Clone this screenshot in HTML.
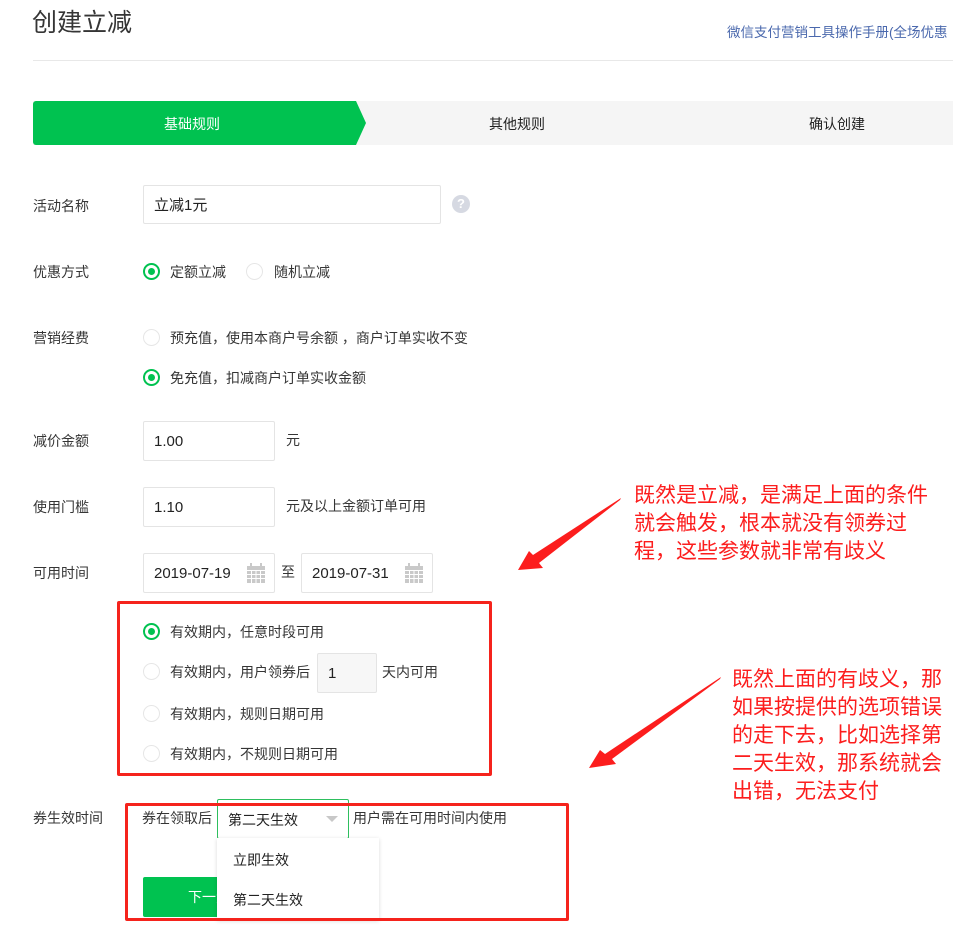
<!DOCTYPE html>
<html><head><meta charset="utf-8"><style>
*{margin:0;padding:0;box-sizing:border-box}
body{width:953px;height:934px;background:#fff;position:relative;overflow:hidden;font-family:"Liberation Sans","Noto Sans CJK SC",sans-serif;font-size:14px;color:#353535}
.a{position:absolute;white-space:nowrap}
.lbl{position:absolute;left:33px;line-height:20px;color:#353535}
.inp{position:absolute;border:1px solid #e4e4e4;border-radius:2px;background:#fff;padding-left:10px;line-height:39px;font-size:15px;color:#222}
.r{position:absolute;width:17px;height:17px;border-radius:50%;border:1px solid #e6e6e6;background:#fff}
.r.on{border:2px solid #00c250}
.r.on:after{content:"";position:absolute;left:3px;top:3px;width:7px;height:7px;border-radius:50%;background:#00c250}
.t{position:absolute;line-height:20px;white-space:nowrap}
.red{position:absolute;border:3px solid #f5231c;border-radius:2px}
.note{position:absolute;color:#fc1d1d;font-size:21px;line-height:28px}
</style></head><body>
<div class="a" style="left:32px;top:6px;font-size:25px;color:#353535;line-height:34px">创建立减</div>
<div class="a" style="left:727px;top:21px;color:#4a68ad;font-size:13.5px">微信支付营销工具操作手册(全场优惠</div>
<div class="a" style="left:33px;top:60px;width:920px;height:1px;background:#e8e8e8"></div>

<div class="a" style="left:33px;top:101px;width:920px;height:44px;background:#f5f5f5"></div>
<svg class="a" style="left:33px;top:101px" width="340" height="44"><path d="M3 0H323L333 22L323 44H3A3 3 0 0 1 0 41V3A3 3 0 0 1 3 0Z" fill="#00c250"/></svg>
<div class="a" style="left:164px;top:114px;color:#fff;line-height:20px">基础规则</div>
<div class="a" style="left:489px;top:114px;color:#222;line-height:20px">其他规则</div>
<div class="a" style="left:809px;top:114px;color:#222;line-height:20px">确认创建</div>

<div class="lbl" style="top:196px">活动名称</div>
<div class="inp" style="left:143px;top:185px;width:298px;height:39px">立减1元</div>
<div class="a" style="left:452px;top:195px;width:18px;height:18px;border-radius:50%;background:#d6d9e2;color:#fff;font-size:13px;font-weight:bold;text-align:center;line-height:18px">?</div>

<div class="lbl" style="top:262px">优惠方式</div>
<div class="r on" style="left:143px;top:263px"></div><div class="t" style="left:170px;top:262px">定额立减</div>
<div class="r" style="left:246px;top:263px"></div><div class="t" style="left:274px;top:262px">随机立减</div>

<div class="lbl" style="top:328px">营销经费</div>
<div class="r" style="left:143px;top:329px"></div><div class="t" style="left:170px;top:328px">预充值，使用本商户号余额 ，商户订单实收不变</div>
<div class="r on" style="left:143px;top:369px"></div><div class="t" style="left:170px;top:368px">免充值，扣减商户订单实收金额</div>

<div class="lbl" style="top:431px">减价金额</div>
<div class="inp" style="left:143px;top:421px;width:132px;height:40px">1.00</div>
<div class="t" style="left:286px;top:430px">元</div>

<div class="lbl" style="top:497px">使用门槛</div>
<div class="inp" style="left:143px;top:487px;width:132px;height:40px">1.10</div>
<div class="t" style="left:286px;top:496px">元及以上金额订单可用</div>

<div class="lbl" style="top:563px">可用时间</div>
<div class="inp" style="left:143px;top:553px;width:132px;height:40px">2019-07-19</div>
<div class="t" style="left:281px;top:562px">至</div>
<div class="inp" style="left:301px;top:553px;width:132px;height:40px">2019-07-31</div>
<svg class="a" style="left:247px;top:563px" width="18" height="20"><g fill="#c9c9c9"><rect x="0" y="3" width="18" height="17"/><rect x="3" y="0" width="2" height="5"/><rect x="13" y="0" width="2" height="5"/></g><g stroke="#fff" stroke-width="1"><path d="M0 7.5H18M0 11.5H18M0 15.5H18M4.5 7V20M9 7V20M13.5 7V20"/></g></svg>
<svg class="a" style="left:405px;top:563px" width="18" height="20"><g fill="#c9c9c9"><rect x="0" y="3" width="18" height="17"/><rect x="3" y="0" width="2" height="5"/><rect x="13" y="0" width="2" height="5"/></g><g stroke="#fff" stroke-width="1"><path d="M0 7.5H18M0 11.5H18M0 15.5H18M4.5 7V20M9 7V20M13.5 7V20"/></g></svg>

<div class="red" style="left:117px;top:601px;width:375px;height:175px"></div>
<div class="r on" style="left:143px;top:623px"></div><div class="t" style="left:170px;top:622px">有效期内，任意时段可用</div>
<div class="r" style="left:143px;top:663px"></div><div class="t" style="left:170px;top:662px">有效期内，用户领券后</div>
<div class="inp" style="left:317px;top:653px;width:60px;height:40px;background:#f7f7f7">1</div>
<div class="t" style="left:382px;top:662px">天内可用</div>
<div class="r" style="left:143px;top:705px"></div><div class="t" style="left:170px;top:704px">有效期内，规则日期可用</div>
<div class="r" style="left:143px;top:745px"></div><div class="t" style="left:170px;top:744px">有效期内，不规则日期可用</div>

<div class="lbl" style="top:808px">券生效时间</div>
<div class="a" style="left:143px;top:877px;width:120px;height:40px;background:#00c250;border-radius:2px"></div>
<div class="a" style="left:188px;top:887px;color:#fff;line-height:20px">下一步</div>
<div class="t" style="left:142px;top:808px">券在领取后</div>
<div class="a" style="left:217px;top:799px;width:132px;height:40px;border:1px solid #2ebf5e;border-radius:2px;background:#fff"></div>
<div class="t" style="left:228px;top:810px;color:#222">第二天生效</div>
<div class="a" style="left:326px;top:816px;width:0;height:0;border-left:6px solid transparent;border-right:6px solid transparent;border-top:6px solid #c8c8c8"></div>
<div class="t" style="left:353px;top:808px">用户需在可用时间内使用</div>
<div class="a" style="left:217px;top:838px;width:162px;height:82px;background:#fff;box-shadow:0 1px 4px rgba(0,0,0,.15)"></div>
<div class="t" style="left:233px;top:850px;color:#222">立即生效</div>
<div class="t" style="left:233px;top:890px;color:#222">第二天生效</div>
<div class="red" style="left:125px;top:803px;width:444px;height:118px"></div>

<svg class="a" style="left:0;top:0" width="953" height="934">
<path d="M621 498L620 500L539 563L543 568L518 570L529 551L533 555Z" fill="#fc1d1d"/>
<path d="M721 677L720 679L612 759L616 764L589 768L600 750L605 754Z" fill="#fc1d1d"/>
</svg>
<div class="note" style="left:634px;top:482px">既然是立减，是满足上面的条件<br>就会触发，根本就没有领券过<br>程，这些参数就非常有歧义</div>
<div class="note" style="left:732px;top:666px">既然上面的有歧义，那<br>如果按提供的选项错误<br>的走下去，比如选择第<br>二天生效，那系统就会<br>出错，无法支付</div>
</body></html>
